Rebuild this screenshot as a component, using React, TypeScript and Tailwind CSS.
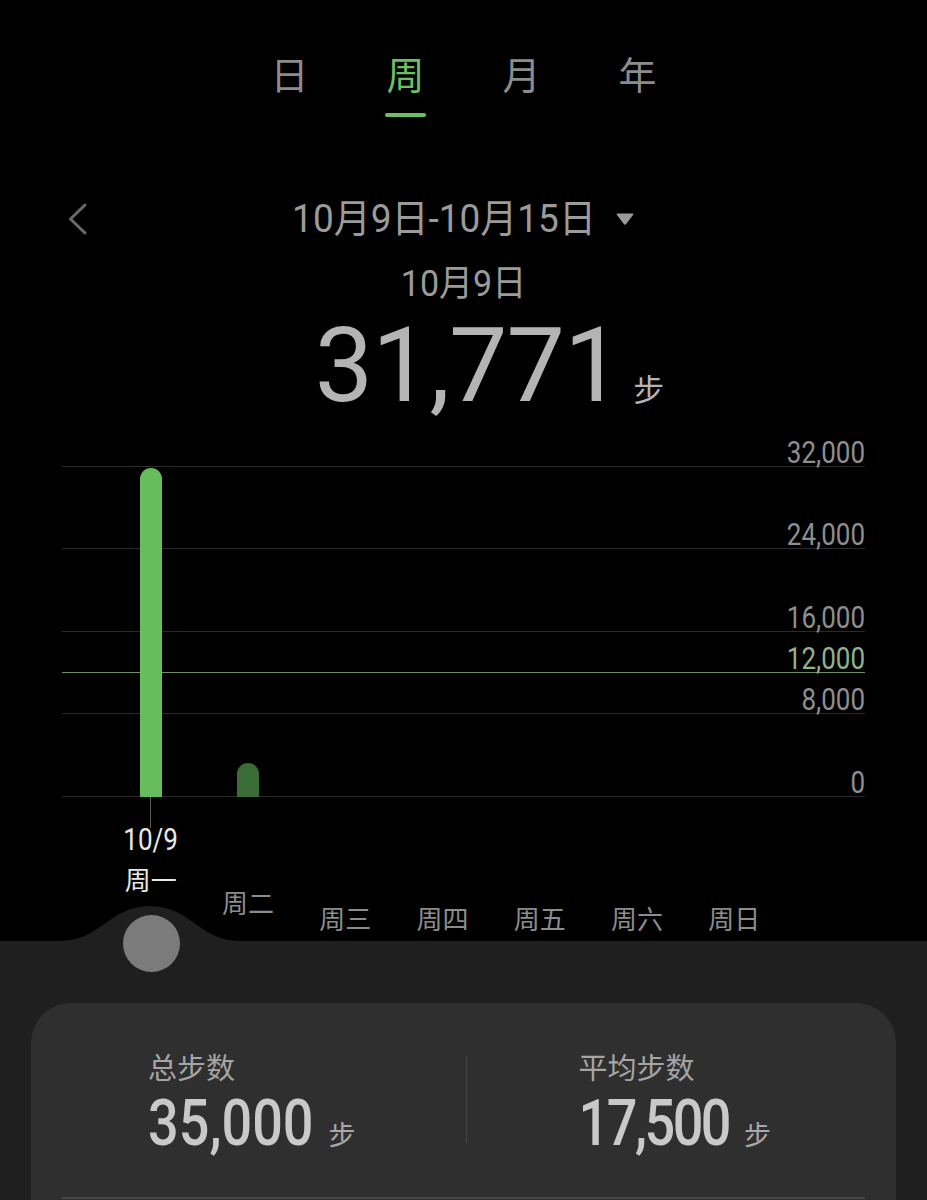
import React from 'react';

const tabs = ['日', '周', '月', '年'];
const days = ['周一', '周二', '周三', '周四', '周五', '周六', '周日'];
const steps = [31771, 3229, 0, 0, 0, 0, 0];

// grid rows: label above each line, heights include the 1px line
const gridRows = [
  { label: '32,000', h: 'h-[30px]', goal: false },
  { label: '24,000', h: 'h-[82px]', goal: false },
  { label: '16,000', h: 'h-[83px]', goal: false },
  { label: '12,000', h: 'h-[41px]', goal: true },
  { label: '8,000', h: 'h-[41px]', goal: false },
  { label: '0', h: 'h-[83px]', goal: false },
];

const MAX = 32000;
const CHART_H = 330;

function StepChart() {
  return (
    <div className="relative ml-[62px] mt-[19px] w-[803px]">
      <div className="flex flex-col">
        {gridRows.map((row) => (
          <div
            key={row.label}
            className={`${row.h} flex items-end justify-end border-b ${
              row.goal ? 'border-[#6d8f67]' : 'border-[#2a2a2a]'
            }`}
          >
            <span
              className={`mb-[-1px] inline-block origin-[50%_84%] scale-y-[1.18] text-[26px] leading-none ${
                row.goal ? 'text-[#8fb389]' : 'text-[#8e8e8e]'
              }`}
            >
              {row.label}
            </span>
          </div>
        ))}
      </div>

      {/* bars sit over the grid */}
      <div className="absolute bottom-0 left-[40px] grid w-[681px] grid-cols-7 items-end">
        {steps.map((v, i) => (
          <div key={i} className="flex justify-center">
            {v > 0 && (
              <div
                className={`w-[22px] rounded-t-full ${i === 0 ? 'bg-[#66bd5b]' : 'bg-[#3b6e36]'}`}
                style={{ height: Math.round((v / MAX) * CHART_H) + 1 }}
              />
            )}
          </div>
        ))}
      </div>
    </div>
  );
}

function DayLabels() {
  return (
    <div className="ml-[102px] grid h-[144px] w-[681px] grid-cols-7 font-['Noto_Sans_CJK_SC',sans-serif] text-[26px] leading-none">
      {days.map((d, i) => {
        if (i === 0) {
          return (
            <div key={d} className="flex flex-col items-center">
              <div className="h-[31px] w-px bg-[#5a5a5a]" />
              <span className="inline-block origin-[50%_84%] scale-y-[1.18] font-['Roboto',sans-serif] text-[26px] leading-none text-[#e8e8e8]">
                10/9
              </span>
              <span className="mt-[12px] text-[#e8e8e8]">{d}</span>
            </div>
          );
        }
        return (
          <div key={d} className={`flex flex-col items-center ${i === 1 ? 'pt-[92px]' : 'pt-[108px]'}`}>
            <span className="text-[#8c8c8c]">{d}</span>
          </div>
        );
      })}
    </div>
  );
}

function StatBlock({ label, value, pad, tight }: { label: string; value: string; pad: string; tight?: boolean }) {
  return (
    <div className={`flex-1 ${pad}`}>
      <div className="font-['Noto_Sans_CJK_SC',sans-serif] text-[29px] leading-none text-[#a5a5a5]">{label}</div>
      <div className="mt-[19px] flex items-baseline">
        <span
          className={`inline-block origin-[50%_84%] scale-y-[1.2] text-[54px] font-medium leading-none text-[#c9c9c9] ${
            tight ? 'tracking-[-2.5px]' : ''
          }`}
        >
          {value}
        </span>
        <span className="ml-[15px] font-['Noto_Sans_CJK_SC',sans-serif] text-[27px] leading-none text-[#a8a8a8]">步</span>
      </div>
    </div>
  );
}

export default function App() {
  return (
    <div className="relative h-[1200px] w-[927px] overflow-hidden bg-black font-['Roboto','Noto_Sans_CJK_SC',sans-serif]">
      {/* period tabs */}
      <div className="flex justify-center pt-[54px]">
        {tabs.map((t) => (
          <div key={t} className="flex w-[116px] flex-col items-center">
            <span
              className={`font-['Noto_Sans_CJK_SC',sans-serif] text-[38px] leading-none ${
                t === '周' ? 'text-[#6dbf63]' : 'text-[#8c8c8c]'
              }`}
            >
              {t}
            </span>
            <div className={`mt-[21px] h-[4px] w-[41px] rounded-full ${t === '周' ? 'bg-[#6dbf63]' : 'bg-transparent'}`} />
          </div>
        ))}
      </div>

      {/* date range */}
      <div className="mt-[83px] grid grid-cols-[1fr_auto_1fr] items-center">
        <div className="flex pl-[66px]">
          <svg width="24" height="34" viewBox="0 0 24 34" fill="none">
            <path d="M19 3 L4.5 17 L19 31" stroke="#6a6a6a" strokeWidth="3" strokeLinecap="round" strokeLinejoin="round" />
          </svg>
        </div>
        <div className="flex items-center">
          <span className="inline-block scale-y-[1.06] text-[37px] leading-none text-[#9b9b9b]">10月9日-10月15日</span>
          <svg className="ml-[19px]" width="20" height="14" viewBox="0 0 20 14">
            <path d="M2.5 1.5 H17.5 Q19 1.5 18 3 L11.2 12 Q10 13.4 8.8 12 L2 3 Q1 1.5 2.5 1.5 Z" fill="#9b9b9b" />
          </svg>
        </div>
        <div />
      </div>

      <div className="mt-[29px] flex justify-center">
        <span className="inline-block scale-y-[1.08] text-[34px] leading-none text-[#9b9b9b]">10月9日</span>
      </div>

      <div className="mt-[14px] flex items-baseline justify-center pl-[52px]">
        <span className="text-[104px] leading-none tracking-[-1px] text-[#b4b4b4]">31,771</span>
        <span className="ml-[12px] font-['Noto_Sans_CJK_SC',sans-serif] text-[31px] leading-none text-[#b4b4b4]">步</span>
      </div>

      <StepChart />
      <DayLabels />

      {/* bottom panel */}
      <div className="relative h-[259px] bg-[#1f1f1f] px-[31px] pt-[62px]">
        <svg className="absolute left-[50px] top-[-36px]" width="200" height="38" viewBox="0 0 200 38">
          <path d="M10 36 C50 36 60 1 100 1 C140 1 150 36 190 36 L190 38 L10 38 Z" fill="#1f1f1f" />
        </svg>
        <div className="absolute left-[123px] top-[-26px] h-[57px] w-[57px] rounded-full bg-[#7b7b7b]" />

        <div className="h-[240px] rounded-t-[40px] bg-[#2f2f2f]">
          <div className="flex items-start pt-[49px]">
            <StatBlock label="总步数" value="35,000" pad="pl-[117px]" />
            <div className="mt-[4px] h-[87px] w-px bg-[#474747]" />
            <StatBlock label="平均步数" value="17,500" pad="pl-[112px]" tight />
          </div>
          <div className="mx-[31px] mt-[43px] h-[2px] bg-[#474747]" />
        </div>
      </div>
    </div>
  );
}
